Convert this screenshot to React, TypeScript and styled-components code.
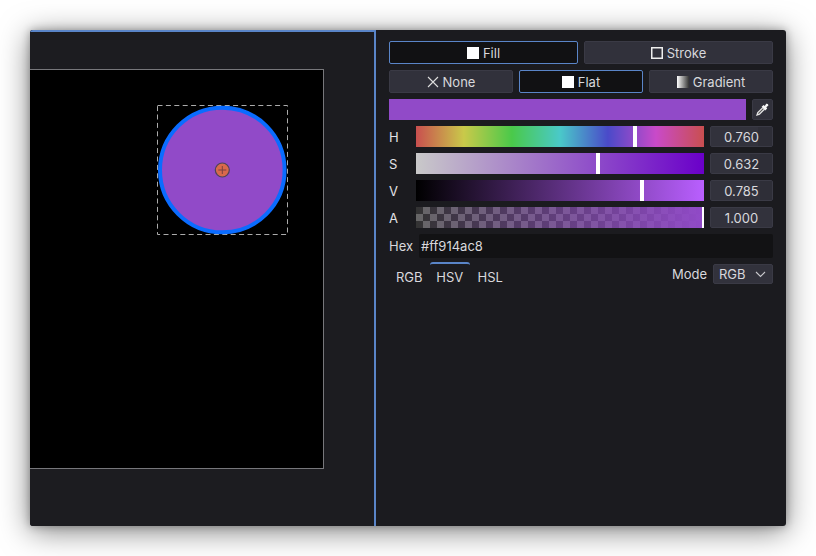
import { FC } from "react";
import styled, { createGlobalStyle } from "styled-components";

type SliderRow = {
  label: string;
  value: string;
  pos: number;
  fill: string;
  shade: number;
};

const sliders: SliderRow[] = [
  {
    label: "H",
    value: "0.760",
    pos: 217,
    shade: 47,
    fill: "linear-gradient(90deg, #c94f4f 0%, #c9c94a 16.6%, #4ac94a 33.3%, #4ac9c9 50%, #4a4ac9 66.6%, #c94ac9 83.3%, #c94f4f 100%)"
  },
  {
    label: "S",
    value: "0.632",
    pos: 180,
    shade: 39,
    fill: "linear-gradient(90deg, #c9c9c9 0%, #6a00c9 100%)"
  },
  {
    label: "V",
    value: "0.785",
    pos: 224,
    shade: 49,
    fill: "linear-gradient(90deg, #000 0%, #b95fff 100%)"
  },
  {
    label: "A",
    value: "1.000",
    pos: 286,
    shade: 0,
    fill: "linear-gradient(90deg, rgba(145,74,200,0) 0%, #914ac8 100%), repeating-conic-gradient(#666 0% 25%, #333 0% 50%) 0 0 / 14px 14px"
  }
];

const GlobalStyle = createGlobalStyle`
  html, body {
    margin: 0;
    background: #fff;
  }
  body {
    font-family: "Inter", "Liberation Sans", sans-serif;
    font-size: 13px;
    color: #d6d6da;
  }
`;

const SquareIcon: FC<{ outline?: boolean }> = ({ outline }) => (
  <svg width="12" height="12" viewBox="0 0 12 12">
    {outline ? (
      <rect x="0.75" y="0.75" width="10.5" height="10.5" fill="none" stroke="#eee" strokeWidth="1.5" />
    ) : (
      <rect width="12" height="12" fill="#fff" />
    )}
  </svg>
);

const CrossIcon: FC = () => (
  <svg width="12" height="12" viewBox="0 0 12 12">
    <path d="M1 1 L11 11 M11 1 L1 11" stroke="#ddd" strokeWidth="1.1" fill="none" />
  </svg>
);

const GradientIcon: FC = () => (
  <svg width="12" height="12" viewBox="0 0 12 12">
    <defs>
      <linearGradient id="gradIcon" x1="0" x2="1" y1="0" y2="0">
        <stop offset="0" stopColor="#fff" />
        <stop offset="1" stopColor="#333" />
      </linearGradient>
    </defs>
    <rect width="12" height="12" fill="url(#gradIcon)" />
  </svg>
);

const DropperIcon: FC = () => (
  <svg width="13" height="13" viewBox="0 0 13 13">
    <path d="M6.8 4.6 L1.8 9.6 L1 12 L3.4 11.2 L8.4 6.2" fill="#555" stroke="#e4e4e4" strokeWidth="1.3" />
    <path d="M5.6 3.8 L7.6 1.9 L8.8 2.9 L10.2 0.8 Q12.4 0.2 12.4 2.6 L10.3 4.2 L11.2 5.4 L9.2 7.4 Z" fill="#f6f6f6" />
  </svg>
);

const Chevron: FC = () => (
  <svg width="11" height="7" viewBox="0 0 11 7">
    <path d="M1 1 L5.5 5.5 L10 1" fill="none" stroke="#c8c8cc" strokeWidth="1.1" />
  </svg>
);

const App: FC = () => {
  return (
    <Page>
      <GlobalStyle />
      <Window>
        <LeftPane>
          <Canvas>
            <ShapeSvg width="132" height="132" viewBox="0 0 132 132">
              <rect x="0.5" y="0.5" width="130" height="129" fill="none" stroke="#ababab" strokeWidth="1" strokeDasharray="5 3.4" />
              <circle cx="65.3" cy="65" r="62.3" fill="#914ac8" stroke="#0a6cff" strokeWidth="4" />
              <circle cx="65.3" cy="65" r="7" fill="#d9694c" stroke="#4d4458" strokeWidth="1.2" />
              <path d="M61.3 65 H69.3 M65.3 61 V69" stroke="#7a4040" strokeWidth="1" />
            </ShapeSvg>
          </Canvas>
        </LeftPane>
        <RightPane>
          <ButtonRow>
            <ModeButton $active>
              <SquareIcon />
              Fill
            </ModeButton>
            <ModeButton>
              <SquareIcon outline />
              Stroke
            </ModeButton>
          </ButtonRow>
          <ButtonRow>
            <ModeButton>
              <CrossIcon />
              None
            </ModeButton>
            <ModeButton $active>
              <SquareIcon />
              Flat
            </ModeButton>
            <ModeButton>
              <GradientIcon />
              Gradient
            </ModeButton>
          </ButtonRow>
          <ColorRow>
            <ColorBar />
            <DropperButton>
              <DropperIcon />
            </DropperButton>
          </ColorRow>
          {sliders.map(s => (
            <Row key={s.label}>
              <RowLabel>{s.label}</RowLabel>
              <Track $fill={s.fill}>
                <Marker style={{ left: s.pos }} />
              </Track>
              <ValueBox>
                {s.shade > 0 && <ValueShade style={{ left: s.shade }} />}
                <ValueText>{s.value}</ValueText>
              </ValueBox>
            </Row>
          ))}
          <HexRow>
            <HexLabel>Hex</HexLabel>
            <HexInput>#ff914ac8</HexInput>
          </HexRow>
          <BottomRow>
            <Tabs>
              <Tab>RGB</Tab>
              <Tab $active>HSV</Tab>
              <Tab>HSL</Tab>
            </Tabs>
            <ModeArea>
              <ModeLabel>Mode</ModeLabel>
              <Select>
                RGB
                <Chevron />
              </Select>
            </ModeArea>
          </BottomRow>
        </RightPane>
      </Window>
    </Page>
  );
};

export default App;

const Page = styled.div`
  width: 816px;
  height: 556px;
  padding: 30px;
  box-sizing: border-box;
  background: #fff;
  overflow: hidden;
`;

const Window = styled.div`
  width: 756px;
  height: 496px;
  display: flex;
  background: #1b1b1f;
  border-radius: 3px;
  overflow: hidden;
  box-shadow: 0 5px 30px rgba(0, 0, 0, 0.5), 0 0 8px rgba(0, 0, 0, 0.3);
`;

const LeftPane = styled.div`
  width: 346px;
  flex-shrink: 0;
  box-sizing: border-box;
  border-top: 2px solid #5a85c8;
  border-right: 2px solid #5a85c8;
  padding-top: 37px;
  background: #1c1c20;
`;

const Canvas = styled.div`
  position: relative;
  width: 294px;
  height: 400px;
  box-sizing: border-box;
  background: #000;
  border: 1px solid #77777b;
  border-left: none;
`;

const ShapeSvg = styled.svg`
  position: absolute;
  left: 127px;
  top: 35px;
`;

const RightPane = styled.div`
  flex: 1;
  box-sizing: border-box;
  padding: 11px 13px 0 13px;
  display: flex;
  flex-direction: column;
  gap: 6px;
`;

const ButtonRow = styled.div`
  display: flex;
  gap: 6px;
`;

const ModeButton = styled.div<{ $active?: boolean }>`
  flex: 1;
  height: 23px;
  box-sizing: border-box;
  display: flex;
  align-items: center;
  justify-content: center;
  gap: 4px;
  font-size: 13px;
  border-radius: 2px;
  color: #d8d8dc;
  background: ${p => (p.$active ? "#111113" : "#31313b")};
  border: 1px solid ${p => (p.$active ? "#5a85c8" : "#3a3a45")};
`;

const ColorRow = styled.div`
  display: flex;
  gap: 6px;
  height: 21px;
`;

const ColorBar = styled.div`
  flex: 1;
  background: #914ac8;
`;

const DropperButton = styled.div`
  width: 21px;
  box-sizing: border-box;
  display: flex;
  align-items: center;
  justify-content: center;
  background: #31313b;
  border: 1px solid #3a3a45;
  border-radius: 2px;
`;

const Row = styled.div`
  display: flex;
  align-items: center;
  height: 21px;
`;

const RowLabel = styled.div`
  width: 27px;
  flex-shrink: 0;
  font-size: 13px;
  color: #e2e2e6;
`;

const Track = styled.div<{ $fill: string }>`
  position: relative;
  width: 288px;
  height: 21px;
  flex-shrink: 0;
  overflow: hidden;
  background: ${p => p.$fill};
`;

const Marker = styled.div`
  position: absolute;
  top: 0;
  width: 4px;
  height: 100%;
  background: #fff;
`;

const ValueBox = styled.div`
  position: relative;
  margin-left: 6px;
  width: 63px;
  height: 21px;
  box-sizing: border-box;
  background: #32323c;
  border: 1px solid #3a3a45;
  border-radius: 2px;
  overflow: hidden;
`;

const ValueShade = styled.div`
  position: absolute;
  top: 0;
  right: 0;
  bottom: 0;
  background: #2e2e37;
`;

const ValueText = styled.div`
  position: relative;
  text-align: center;
  line-height: 20px;
  font-size: 13px;
  color: #d8d8dc;
`;

const HexRow = styled.div`
  display: flex;
  align-items: center;
  height: 24px;
`;

const HexLabel = styled.div`
  width: 30px;
  flex-shrink: 0;
  font-size: 13px;
  color: #d8d8dc;
`;

const HexInput = styled.div`
  flex: 1;
  height: 24px;
  line-height: 24px;
  box-sizing: border-box;
  padding-left: 2px;
  background: #121214;
  border-radius: 2px;
  font-size: 13px;
  color: #d8d8dc;
`;

const BottomRow = styled.div`
  display: flex;
  justify-content: space-between;
  align-items: flex-start;
  margin-top: -2px;
`;

const Tabs = styled.div`
  display: flex;
`;

const Tab = styled.div<{ $active?: boolean }>`
  width: 40.5px;
  height: 26px;
  box-sizing: border-box;
  padding-top: 5px;
  text-align: center;
  font-size: 13px;
  color: #d8d8dc;
  border-top: 2px solid ${p => (p.$active ? "#5a85c8" : "transparent")};
  border-radius: 3px 3px 0 0;
`;

const ModeArea = styled.div`
  display: flex;
  align-items: center;
  gap: 6px;
  margin-top: 2px;
`;

const ModeLabel = styled.div`
  font-size: 13px;
  color: #d8d8dc;
`;

const Select = styled.div`
  width: 60px;
  height: 20px;
  box-sizing: border-box;
  padding: 0 6px 0 5px;
  display: flex;
  align-items: center;
  justify-content: space-between;
  background: #32323c;
  border: 1px solid #3a3a45;
  border-radius: 2px;
  font-size: 13px;
  color: #d8d8dc;
`;
